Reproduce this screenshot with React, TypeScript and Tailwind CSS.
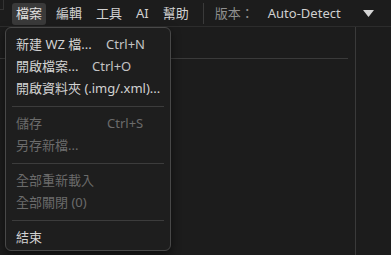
import React from 'react';

type Item =
  | { sep: true }
  | { label: string; shortcut?: string; labelW?: string; disabled?: boolean; sep?: false };

const items: Item[] = [
  { label: '新建 WZ 檔...', shortcut: 'Ctrl+N', labelW: 'w-[90px]' },
  { label: '開啟檔案...', shortcut: 'Ctrl+O', labelW: 'w-[76px]' },
  { label: '開啟資料夾 (.img/.xml)...' },
  { sep: true },
  { label: '儲存', shortcut: 'Ctrl+S', labelW: 'w-[91px]', disabled: true },
  { label: '另存新檔...', disabled: true },
  { sep: true },
  { label: '全部重新載入', disabled: true },
  { label: '全部關閉 (0)', disabled: true },
  { sep: true },
  { label: '結束' },
];

const App = () => {
  return (
    <div
      className="w-[391px] h-[255px] bg-[#1c1c1c] overflow-hidden relative text-[13px] text-[#d2d2d2]"
      style={{ fontFamily: '"Noto Sans", "Noto Sans CJK TC", sans-serif' }}
    >
      {/* Top menu bar */}
      <div className="h-[27px] flex items-center border-b border-[#2c2c2c] relative">
        <div className="absolute left-0 top-0 w-[4px] h-[10px] border-r border-b border-[#333]" />
        <div className="flex items-center gap-[6px] pl-[12px] pt-px">
          <div className="h-[22px] px-1 rounded-[3px] bg-[#3a3a3a] flex items-center text-[#e0e0e0]">檔案</div>
          <div className="h-[22px] px-1 flex items-center">編輯</div>
          <div className="h-[22px] px-1 flex items-center">工具</div>
          <div className="h-[22px] px-1 flex items-center">AI</div>
          <div className="h-[22px] px-1 flex items-center">幫助</div>
        </div>
        <div className="w-px h-[21px] bg-[#3a3a3a] ml-[10px]" />
        <div className="ml-[11px] text-[#8f8f8f] w-[53px] pt-px">版本：</div>
        <div className="text-[#cfcfcf] pt-px">Auto-Detect</div>
        <svg width="11" height="7" viewBox="0 0 11 7" className="ml-[22px]">
          <path d="M0 0 H11 L5.5 7 Z" fill="#d6d6d6" />
        </svg>
      </div>

      {/* Background panels */}
      <div className="flex h-[228px]">
        <div className="w-[355px] flex flex-col">
          <div className="h-[32px] border-b border-[#3a3a3a] mr-[7px]" />
        </div>
        <div className="w-px bg-[#3a3a3a]" />
      </div>

      {/* Dropdown menu */}
      <div className="absolute left-[5px] top-[27px] w-[166px] h-[224px] rounded-[6px] border border-[#484848] bg-[#1e1e1e] shadow-[0_4px_10px_rgba(0,0,0,0.5)] pt-[6px]">
        {items.map((it, i) =>
          it.sep ? (
            <div key={i} className="h-[13px] flex items-center px-[6px]">
              <div className="h-px w-full bg-[#3c3c3c]" />
            </div>
          ) : (
            <div
              key={i}
              className={`h-[22px] flex items-center pl-[10px] whitespace-nowrap ${
                it.disabled ? 'text-[#6b6b6b]' : 'text-[#d2d2d2]'
              }`}
            >
              <span className={it.labelW ?? ''}>{it.label}</span>
              {it.shortcut && <span className={it.disabled ? 'text-[#6b6b6b]' : 'text-[#c4c4c4]'}>{it.shortcut}</span>}
            </div>
          )
        )}
      </div>
    </div>
  );
};

export default App;
